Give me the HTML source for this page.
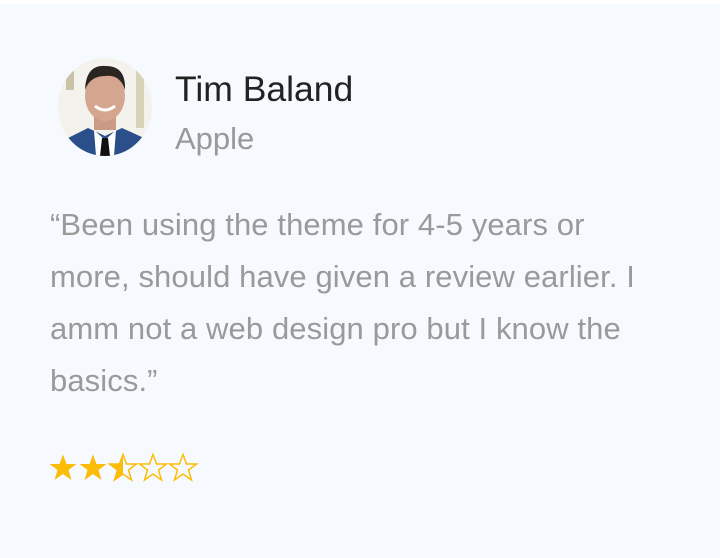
<!DOCTYPE html>
<html><head><style>
html,body{margin:0;padding:0;background:#fff;}
.card{position:absolute;left:0;top:4px;width:720px;height:554px;background:#f6f9fe;font-family:"Liberation Sans",sans-serif;}
.av{position:absolute;left:58px;top:54px;width:94px;height:98px;border-radius:50%;overflow:hidden;background:#fff;}
.name{position:absolute;left:175px;top:65px;font-size:35.5px;color:#222;}
.co{position:absolute;left:175px;top:117px;font-size:31px;color:#999;}
.q{position:absolute;left:50px;top:195px;white-space:nowrap;font-size:31px;line-height:52px;letter-spacing:0.1px;color:#9a9a9a;}
.st{position:absolute;left:49px;top:448px;}
</style></head><body>
<div class="card">
<div class="av"><svg width="94" height="98" viewBox="0 0 94 98">
<rect width="94" height="98" fill="#f4f2ec"/>
<rect x="78" y="10" width="8" height="60" fill="#d8d2b8"/>
<rect x="8" y="12" width="8" height="20" fill="#c9c2a8"/>
<path d="M0 98 L10 80 L30 70 L47 78 L64 70 L86 80 L94 98Z" fill="#2a4f8a"/>
<path d="M36 72 L47 82 L58 72 L56 98 L38 98Z" fill="#fff"/>
<path d="M44 80 L50 80 L52 98 L42 98Z" fill="#111"/>
<rect x="36" y="52" width="22" height="20" fill="#c99a85"/>
<ellipse cx="47" cy="38" rx="20" ry="25" fill="#d4a690"/>
<path d="M27 32 Q28 6 48 8 Q68 8 67 32 Q62 16 47 18 Q32 18 27 32Z" fill="#2b2522"/>
<path d="M37 48 Q47 56 57 48" stroke="#fff" stroke-width="3" fill="none"/>
</svg></div>
<div class="name">Tim Baland</div>
<div class="co">Apple</div>
<div class="q">“Been using the theme for 4-5 years or<br>more, should have given a review earlier. I<br>amm not a web design pro but I know the<br>basics.”</div>
<svg class="st" width="152" height="32" viewBox="0 0 152 32">
<defs>
<path id="s" d="M14 1.5 L17.5 11 L27.5 11 L19.5 17 L22.5 27 L14 21 L5.5 27 L8.5 17 L0.5 11 L10.5 11Z"/>
</defs>
<use href="#s" x="0" y="1" fill="#fbbd08"/>
<use href="#s" x="30" y="1" fill="#fbbd08"/>
<use href="#s" x="60" y="1" fill="none" stroke="#fbbd08" stroke-width="1.5"/>
<path d="M74 2.5 L70.5 12 L60.5 12 L68.5 18 L65.5 28 L74 22Z" fill="#fbbd08"/>
<use href="#s" x="90" y="1" fill="none" stroke="#fbbd08" stroke-width="1.5"/>
<use href="#s" x="120" y="1" fill="none" stroke="#fbbd08" stroke-width="1.5"/>
</svg>
</div>
</body></html>
